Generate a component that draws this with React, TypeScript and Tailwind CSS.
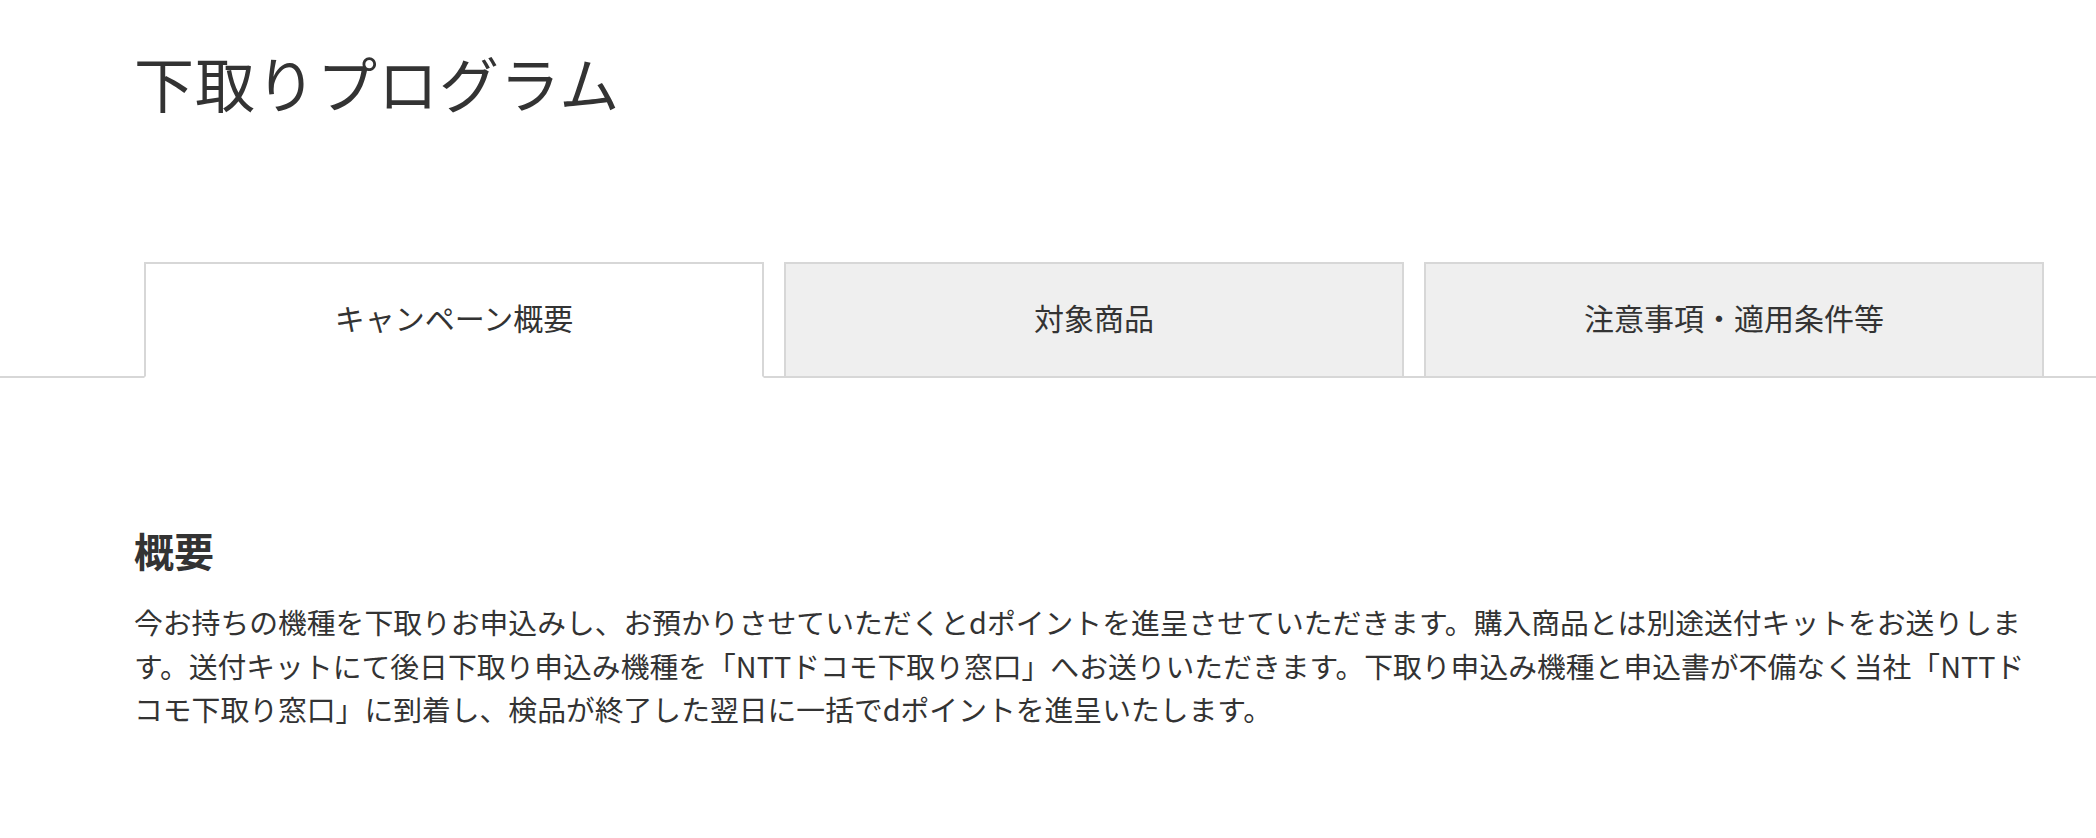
import React from 'react'

const tabs = [
  { label: 'キャンペーン概要', active: true },
  { label: '対象商品', active: false },
  { label: '注意事項・適用条件等', active: false },
]

export default function App() {
  return (
    <div className="min-h-screen bg-white text-[#333] font-['Noto_Sans_CJK_JP','Noto_Sans',sans-serif]">
      {/* Page title */}
      <header className="pl-[134px] pt-[52px]">
        <h1 className="text-[60px] leading-[60px] font-normal tracking-[1px]">下取りプログラム</h1>
      </header>

      {/* Tabs */}
      <nav className="mt-[150px] flex items-end gap-[20px] border-b-2 border-[#d7d7d7] pl-[144px]">
        {tabs.map((tab) => (
          <button
            key={tab.label}
            className={
              tab.active
                ? '-mb-[2px] flex h-[116px] w-[620px] items-center justify-center border-2 border-[#d7d7d7] border-b-white bg-white pb-[6px] text-[30px] leading-none text-[#333]'
                : '-mb-[2px] flex h-[116px] w-[620px] items-center justify-center border-2 border-[#d7d7d7] bg-[#efefef] pb-[6px] text-[30px] leading-none text-[#333]'
            }
          >
            {tab.label}
          </button>
        ))}
      </nav>

      {/* Content */}
      <section className="pl-[134px] pt-[152px]">
        <h2 className="text-[40px] leading-[40px] font-bold">概要</h2>
        <p className="mt-[30px] w-[1902px] text-[28.8px] leading-[43.5px]">
          今お持ちの機種を下取りお申込みし、お預かりさせていただくとdポイントを進呈させていただきます。購入商品とは別途送付キットをお送りします。送付キットにて後日下取り申込み機種を「NTTドコモ下取り窓口」へお送りいただきます。下取り申込み機種と申込書が不備なく当社「NTTドコモ下取り窓口」に到着し、検品が終了した翌日に一括でdポイントを進呈いたします。
        </p>
      </section>
    </div>
  )
}
